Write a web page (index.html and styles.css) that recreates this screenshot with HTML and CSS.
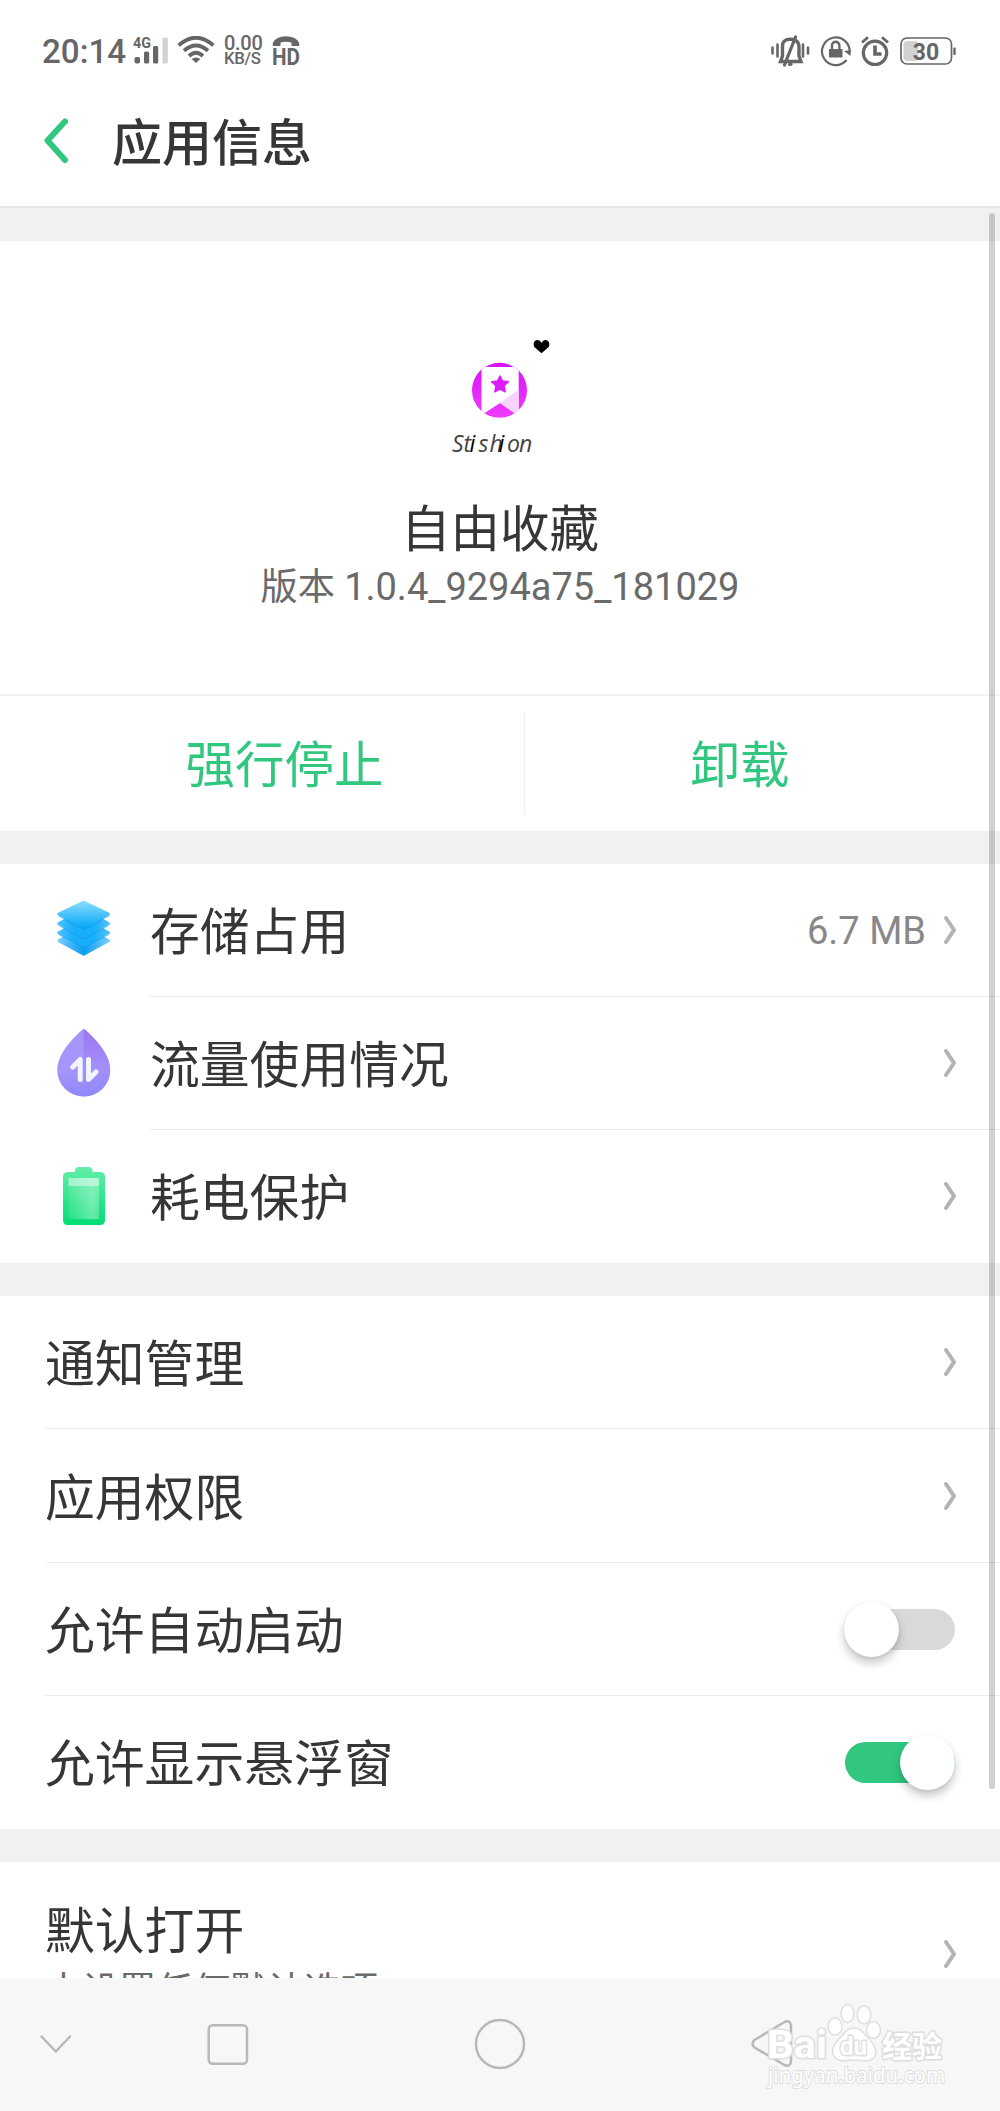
FILE: index.html
```html
<!DOCTYPE html>
<html lang="zh-CN">
<head>
<meta charset="utf-8">
<title>应用信息</title>
<link rel="stylesheet" href="styles.css">
</head>
<body>
<div class="screen">
  <div class="status">
    <div class="status-left">
      <span class="clock">20:14</span>
      <svg class="signal" width="36" height="28" viewBox="0 0 36 28">
        <text x="0" y="11.6" class="net" textLength="18" lengthAdjust="spacingAndGlyphs">4G</text>
        <g fill="#666"><rect x="1.500" y="21" width="5.600" height="6.500" rx="2"/><rect x="11" y="15.500" width="5.200" height="12" rx="1.500"/><rect x="20" y="10" width="5.200" height="17.500" rx="1.500"/></g>
        <rect x="29.500" y="1.500" width="5.300" height="26" rx="1.500" fill="#d2d2d2"/>
      </svg>
      <svg class="wifi" width="38" height="28" viewBox="0 0 38 28" fill="none" stroke="#666" stroke-width="3.800">
        <path d="M1.700 9.300Q19-6 36.300 9.300M7 14.800Q19 4.300 31 14.800M12 20Q19 13.600 26 20"/>
        <path d="M14.700 23Q19 19.800 23.300 23L19 27z" fill="#666" stroke="none"/>
      </svg>
      <span class="speed"><b>0.00</b><i>KB/S</i></span>
      <svg class="hd" width="29" height="36" viewBox="0 0 29 36">
        <path d="M.8 11V8Q4 1.300 14 1.300T27.200 8V11H19.500V7.500Q14 6.200 8.500 7.500V11z" fill="#666"/>
        <text x="0" y="29.500" class="hd-text" textLength="28" lengthAdjust="spacingAndGlyphs">HD</text>
      </svg>
    </div>
    <div class="status-right">
      <svg width="40" height="34" viewBox="0 0 40 34" fill="none" stroke="#666">
        <path d="M1.500 12.500v6M6.500 9.500v12M32 9.500v12M37 12.500v6" stroke-width="2.600" stroke-linecap="round"/>
        <path d="M9.500 26.500h20.500L28 21V12Q28 4.200 19.500 4.200T11.500 12v9z" stroke-width="3.400"/>
        <path d="M24.500 2L13.500 30M18.500 29.500l1.500-.3" stroke-width="3.200" stroke-linecap="round"/>
      </svg>
      <svg class="lock" width="32" height="32" viewBox="0 0 32 32" fill="none" stroke="#666">
        <path d="M29.500 18A13.800 13.800 0 1 0 26.500 25" stroke-width="2.200"/>
        <path d="M24 16l6.500-1v6z" fill="#666" stroke="none"/>
        <rect x="9" y="14" width="13.500" height="8.500" fill="#666" stroke="none"/>
        <path d="M12 14.500v-4a3.700 3.700 0 0 1 7.400 0v4" stroke-width="2.400"/>
      </svg>
      <svg class="alarm" width="28" height="32" viewBox="0 0 28 32" fill="none" stroke="#666">
        <circle cx="14" cy="17.800" r="11.700" stroke-width="3.200"/>
        <path d="M14 10.500v8.500h6.500" stroke-width="3.600"/>
        <path d="M1 7.500l6-5.300M27 7.500l-6-5.300" stroke-width="2.800"/>
      </svg>
      <svg class="battery" width="56" height="28" viewBox="0 0 56 28">
        <rect x="3.500" y="4" width="15" height="20" rx="4" fill="#d2d2d2"/>
        <rect x="1" y="1" width="50.500" height="26" rx="6" fill="none" stroke="#666" stroke-width="1.700"/>
        <rect x="53.300" y="10.500" width="2.400" height="7.500" rx="1" fill="#666"/>
        <text x="26" y="22.500" text-anchor="middle" class="level">30</text>
      </svg>
    </div>
  </div>

  <header class="topbar">
    <svg width="26" height="48" viewBox="0 0 26 48" fill="none" stroke="#31c77f" stroke-width="6" stroke-linecap="round" stroke-linejoin="round"><path d="M22 4.500L4.500 23.500L22 43"/></svg>
    <h1>应用信息</h1>
  </header>

  <main class="content">
    <section class="card profile">
      <svg class="app-icon" width="120" height="132" viewBox="440 330 120 132">
        <defs>
          <linearGradient id="pink" x1="0" y1="0" x2="0" y2="1"><stop offset="0" stop-color="#d512fb"/><stop offset="1" stop-color="#f03cff"/></linearGradient>
          <clipPath id="disc"><circle cx="499.500" cy="390.300" r="27.500"/></clipPath>
        </defs>
        <path d="M541.500 353.300L534.300 347Q532.500 342.500 535.500 340.500Q539.500 339 541.500 342.700Q543.500 339 547.500 340.500Q550.500 342.500 548.700 347z"/>
        <circle cx="499.500" cy="390.300" r="27.500" fill="url(#pink)"/>
        <g clip-path="url(#disc)">
          <path d="M481.500 367H518.700V416L500 403L481.500 415z" fill="#fff"/>
          <path d="M500 403L518.700 389.500V410L514 413z" fill="#f8d2ff"/>
        </g>
        <path d="M500 376l2.500 5 5.900.8-4.300 4 1 6-5.100-2.600-5.100 2.600 1-6-4.300-4 5.900-.8z" fill="#dc1cfc" stroke="#dc1cfc" stroke-width="1.500" stroke-linejoin="round"/>
        <text y="451.500" class="wordmark" x="452 463.500 469.500 478.500 489.500 498.500 507 519">St<tspan class="dark">i</tspan>sh<tspan class="dark">i</tspan>on</text>
      </svg>
      <h2>自由收藏</h2>
      <p class="version">版本 <span>1.0.4_9294a75_181029</span></p>
      <div class="actions">
        <span class="action stop">强行停止</span>
        <span class="action remove">卸载</span>
      </div>
    </section>

    <section class="card icons-list">
      <div class="row">
        <svg class="icon" width="60" height="72" viewBox="0 0 60 72">
          <defs><linearGradient id="blue" x1="0" y1="0" x2="0" y2="1"><stop offset="0" stop-color="#86dbfd"/><stop offset="1" stop-color="#06a7fb"/></linearGradient>
          <linearGradient id="edge"><stop offset="0" stop-color="#74ccfc"/><stop offset=".5" stop-color="#0a9df2"/><stop offset="1" stop-color="#74ccfc"/></linearGradient>
          <linearGradient id="mid"><stop offset="0" stop-color="#4fc0fc"/><stop offset=".3" stop-color="#18aefb"/><stop offset=".7" stop-color="#18aefb"/><stop offset="1" stop-color="#4fc0fc"/></linearGradient></defs>
          <g stroke-width="3" stroke-linejoin="round">
            <path d="M4.800 46.700L29.700 33L54.500 46.700L29.700 60.300z" fill="url(#edge)" stroke="url(#edge)"/>
            <path d="M4.800 38.700L29.700 25L54.500 38.700L29.700 51.800z" fill="url(#mid)" stroke="url(#mid)"/>
            <path d="M4.800 29.500L29.700 16L54.500 29.500L29.700 43.300z" fill="url(#mid)" stroke="url(#mid)"/>
          </g>
          <path d="M4.800 20L29.700 8L54.500 20L29.700 33.800z" fill="url(#blue)" stroke="url(#blue)" stroke-width="3" stroke-linejoin="round"/>
          <path d="M4.500 22L29.700 35.600L55 22M4.500 31.500L29.700 45L55 31.500M4.500 40.500L29.700 53.500L55 40.500" fill="none" stroke="#0b8fe4" stroke-width=".8" opacity=".6"/>
        </svg>
        <span class="label">存储占用</span>
        <span class="value">6.7 MB</span>
        <svg class="chev" width="14" height="30" viewBox="0 0 14 30"><path d="M3 3L11 15L3 27"/></svg>
      </div>
      <div class="row">
        <svg class="icon" width="60" height="72" viewBox="0 0 60 72">
          <defs><linearGradient id="violet" x1="0" y1="0" x2="0" y2="1"><stop offset="0" stop-color="#a794f8"/><stop offset=".6" stop-color="#a795fb"/><stop offset="1" stop-color="#8d88fb"/></linearGradient>
          <linearGradient id="violet2" x1="0" y1="0" x2="0" y2="1"><stop offset="0" stop-color="#966ff1"/><stop offset=".6" stop-color="#a48ef9"/><stop offset="1" stop-color="#8d88fb"/></linearGradient></defs>
          <path d="M29.700 2Q30.700 2 33.700 5Q56.200 26 56.200 43A26.500 26.500 0 0 1 3.200 43Q3.200 26 25.700 5Q28.700 2 29.700 2z" fill="url(#violet)"/>
          <path d="M29.700 2Q30.700 2 33.700 5Q56.200 26 56.200 43A26.500 26.500 0 0 1 29.700 69.500z" fill="url(#violet2)" opacity=".8"/>
          <path d="M18.700 40L26.200 32.500V52.500M34.500 32.500V52.500L42 45" fill="none" stroke="#f0f6ff" stroke-width="5" stroke-linecap="round" stroke-linejoin="round"/>
        </svg>
        <span class="label">流量使用情况</span>
        <svg class="chev" width="14" height="30" viewBox="0 0 14 30"><path d="M3 3L11 15L3 27"/></svg>
      </div>
      <div class="row">
        <svg class="icon" width="60" height="72" viewBox="0 0 60 72">
          <defs><linearGradient id="green" x1="0" y1="0" x2="0" y2="1"><stop offset="0" stop-color="#64eeaa"/><stop offset="1" stop-color="#04dd74"/></linearGradient>
          <linearGradient id="sheen"><stop offset="0" stop-color="#fff" stop-opacity=".1"/><stop offset=".8" stop-color="#fff" stop-opacity=".35"/><stop offset="1" stop-color="#fff" stop-opacity=".25"/></linearGradient></defs>
          <path d="M14 12h7V11q0-4 4-4H34.500q4 0 4 4v1H46q5 0 5 5V60q0 5-5 5H14q-5 0-5-5V17q0-5 5-5z" fill="url(#green)"/>
          <rect x="14.500" y="18" width="30.500" height="41" fill="url(#sheen)"/>
          <rect x="14.500" y="18" width="30.500" height="8" fill="#fff" opacity=".42"/>
        </svg>
        <span class="label">耗电保护</span>
        <svg class="chev" width="14" height="30" viewBox="0 0 14 30"><path d="M3 3L11 15L3 27"/></svg>
      </div>
    </section>

    <section class="card plain-list">
      <div class="row"><span class="label">通知管理</span><svg class="chev" width="14" height="30" viewBox="0 0 14 30"><path d="M3 3L11 15L3 27"/></svg></div>
      <div class="row tall"><span class="label">应用权限</span><svg class="chev" width="14" height="30" viewBox="0 0 14 30"><path d="M3 3L11 15L3 27"/></svg></div>
      <div class="row"><span class="label">允许自动启动</span><span class="switch"><span class="track"></span></span></div>
      <div class="row"><span class="label">允许显示悬浮窗</span><span class="switch on"><span class="track"></span></span></div>
    </section>

    <section class="card defaults">
      <div class="defaults-text"><span class="label">默认打开</span><span class="note">未设置任何默认选项</span></div>
      <svg class="chev" width="14" height="30" viewBox="0 0 14 30"><path d="M3 3L11 15L3 27"/></svg>
    </section>
    <div class="scrollbar"></div>
  </main>

  <nav class="navbar">
    <svg class="nav-icons" width="1000" height="133" viewBox="0 1978 1000 133" fill="none" stroke="#b8b8b8" stroke-width="2.500" stroke-linecap="round" stroke-linejoin="round">
      <path d="M41.500 2036.500L55.800 2051.500L70 2036.500"/>
      <rect x="208.700" y="2025.300" width="38.300" height="38.500" rx="4"/>
      <circle cx="500" cy="2044" r="24"/>
      <path d="M754.500 2040L784.500 2022Q790.500 2019.500 791 2026V2061Q790.500 2067.500 784.500 2065L754.500 2047.500Q750.500 2044 754.500 2040z"/>
      <g class="mark" stroke="#dedede" stroke-width="3" fill="#fff">
        <text class="mark-bai" x="767" y="2058" textLength="60" lengthAdjust="spacingAndGlyphs">Bai</text>
        <path d="M854 2028Q861 2028 866 2036Q876 2045 876 2052Q875 2061 865 2061Q854 2059 843 2061Q833 2060 832.500 2051Q833 2044 842 2036Q847 2028 854 2028z" stroke-width="1.500"/>
        <g stroke-width="1.500"><ellipse cx="835" cy="2026.500" rx="7" ry="8.700"/><ellipse cx="847.500" cy="2013.500" rx="6.500" ry="9"/><ellipse cx="864" cy="2015" rx="6.800" ry="9"/><ellipse cx="873.500" cy="2030" rx="7" ry="8.500"/></g>
        <text class="mark-du" x="840" y="2055" textLength="27" lengthAdjust="spacingAndGlyphs">du</text>
        <text class="mark-cn" x="882" y="2057">经验</text>
        <text class="mark-url" x="768" y="2083" textLength="177" lengthAdjust="spacingAndGlyphs">jingyan.baidu.com</text>
      </g>
    </svg>
  </nav>
</div>
</body>
</html>
```
FILE: styles.css
```css
* { box-sizing: border-box; }
body { margin: 0; font-family: Roboto, "Noto Sans CJK SC", sans-serif; color: #363636; background: #f1f1f1; }
svg { display: block; flex: none; }
h1, h2, p { margin: 0; font-weight: 400; }
.screen { width: 1000px; height: 2111px; display: flex; flex-direction: column; overflow: hidden; }

.status { height: 100px; background: #fff; display: flex; justify-content: space-between; padding: 35px 44px 0 42px; flex: none; color: #666; }
.status-left, .status-right { display: flex; align-items: flex-start; }
.clock { font-size: 33.2px; font-weight: 500; line-height: 34px; width: 91px; white-space: nowrap; }
.signal { margin-top: 1px; overflow: visible; }
.net { font: 700 14px Roboto, sans-serif; fill: #666; }
.wifi { margin: 1px 0 0 8px; }
.speed { width: 38px; margin-left: 9px; display: flex; flex-direction: column; font-weight: 500; }
.speed b { font-size: 20px; font-weight: 500; line-height: 16px; letter-spacing: -.3px; }
.speed i { font-size: 16.8px; font-style: normal; font-weight: 500; line-height: 15px; letter-spacing: -.3px; }
.hd { margin-left: 10px; }
.hd-text { font: 700 23.5px Roboto, sans-serif; fill: #666; }
.lock { margin-left: 9px; }
.alarm { margin-left: 9px; }
.battery { margin: 2px 0 0 11px; }
.level { font: 700 23px Roboto, sans-serif; fill: #666; }

.topbar { height: 108px; background: #fff; border-bottom: 2px solid #e6e6e6; display: flex; align-items: flex-start; padding: 17px 0 0 43px; flex: none; }
.topbar h1 { margin: -9px 0 0 43px; font-size: 50px; line-height: 72px; font-weight: 500; }

.content { flex: 1; min-height: 0; overflow: hidden; position: relative; display: flex; flex-direction: column; gap: 33px; padding-top: 33px; }
.card { background: #fff; flex: none; }
.scrollbar { position: absolute; left: 989px; top: 5px; width: 6px; height: 1576px; border-radius: 3px; background: rgba(0, 0, 0, .18); }

.profile { height: 590px; display: flex; flex-direction: column; align-items: center; padding-top: 89px; }
.wordmark { font: italic 400 23px "Open Sans", "Noto Sans", sans-serif; fill: #444; }
.dark { fill: #000; }
.profile h2 { margin-top: 32px; font-size: 49.5px; line-height: 72px; }
.version { font-size: 37.2px; line-height: 46px; margin-top: -2px; color: #6a6a6a; white-space: nowrap; }
.version span { font-size: 38px; }
.actions { width: 1000px; height: 137px; margin-top: auto; padding: 16px 45px; border-top: 2px solid #f3f3f3; display: flex; font-size: 49.5px; line-height: 109px; color: #31c77f; text-align: center; }
.stop { width: 480px; border-right: 1px solid #f0f0f0; }
.action { height: 103px; }
.remove { flex: 1; }

.row { height: 133px; display: flex; align-items: center; position: relative; margin-left: 45px; padding-right: 43px; border-bottom: 1px solid #ececec; }
.row:last-child { border-bottom-color: transparent; }
.label { font-size: 49.8px; line-height: 72px; padding-top: 6px; flex: 1; white-space: nowrap; }
.icons-list .row { margin-left: 150px; }
.icons-list .icon { margin-left: -96px; margin-right: 36px; }
.plain-list .tall { height: 134px; }
.value { font-size: 38px; color: #888; margin-right: 17px; padding-top: 2px; }
.chev { fill: none; stroke: #b3b3b3; stroke-width: 4; stroke-linecap: round; stroke-linejoin: round; }
.switch { width: 112px; height: 55px; display: flex; align-items: center; position: relative; left: -1px; }
.track { width: 110px; height: 41px; margin-left: 1px; border-radius: 21px; background: #d9d9d9; }
.switch::after { content: ""; position: absolute; left: 0; top: 0; width: 55px; height: 55px; border-radius: 50%; background: #fff; box-shadow: 0 6px 10px rgba(0, 0, 0, .22), 0 1px 3px rgba(0, 0, 0, .08); }
.on .track { background: #31c77f; }
.on::after { left: 56px; }

.defaults { display: flex; align-items: center; height: 184px; padding: 0 43px 0 45px; }
.defaults-text { flex: 1; display: flex; flex-direction: column; }
.defaults .label { padding-top: 3px; }
.note { font-size: 37px; line-height: 48px; color: #6a6a6a; }

.navbar { height: 133px; flex: none; background: #f7f7f7; }
.mark text { paint-order: stroke; }
.mark-bai { font: 700 38px Roboto, sans-serif; }
.mark-du { font: 700 26px Roboto, sans-serif; }
.mark-cn { font: 700 30px "Noto Sans CJK SC", sans-serif; }
.mark-url { font: 400 21px "Noto Sans", sans-serif; stroke-width: 2px; }
```
